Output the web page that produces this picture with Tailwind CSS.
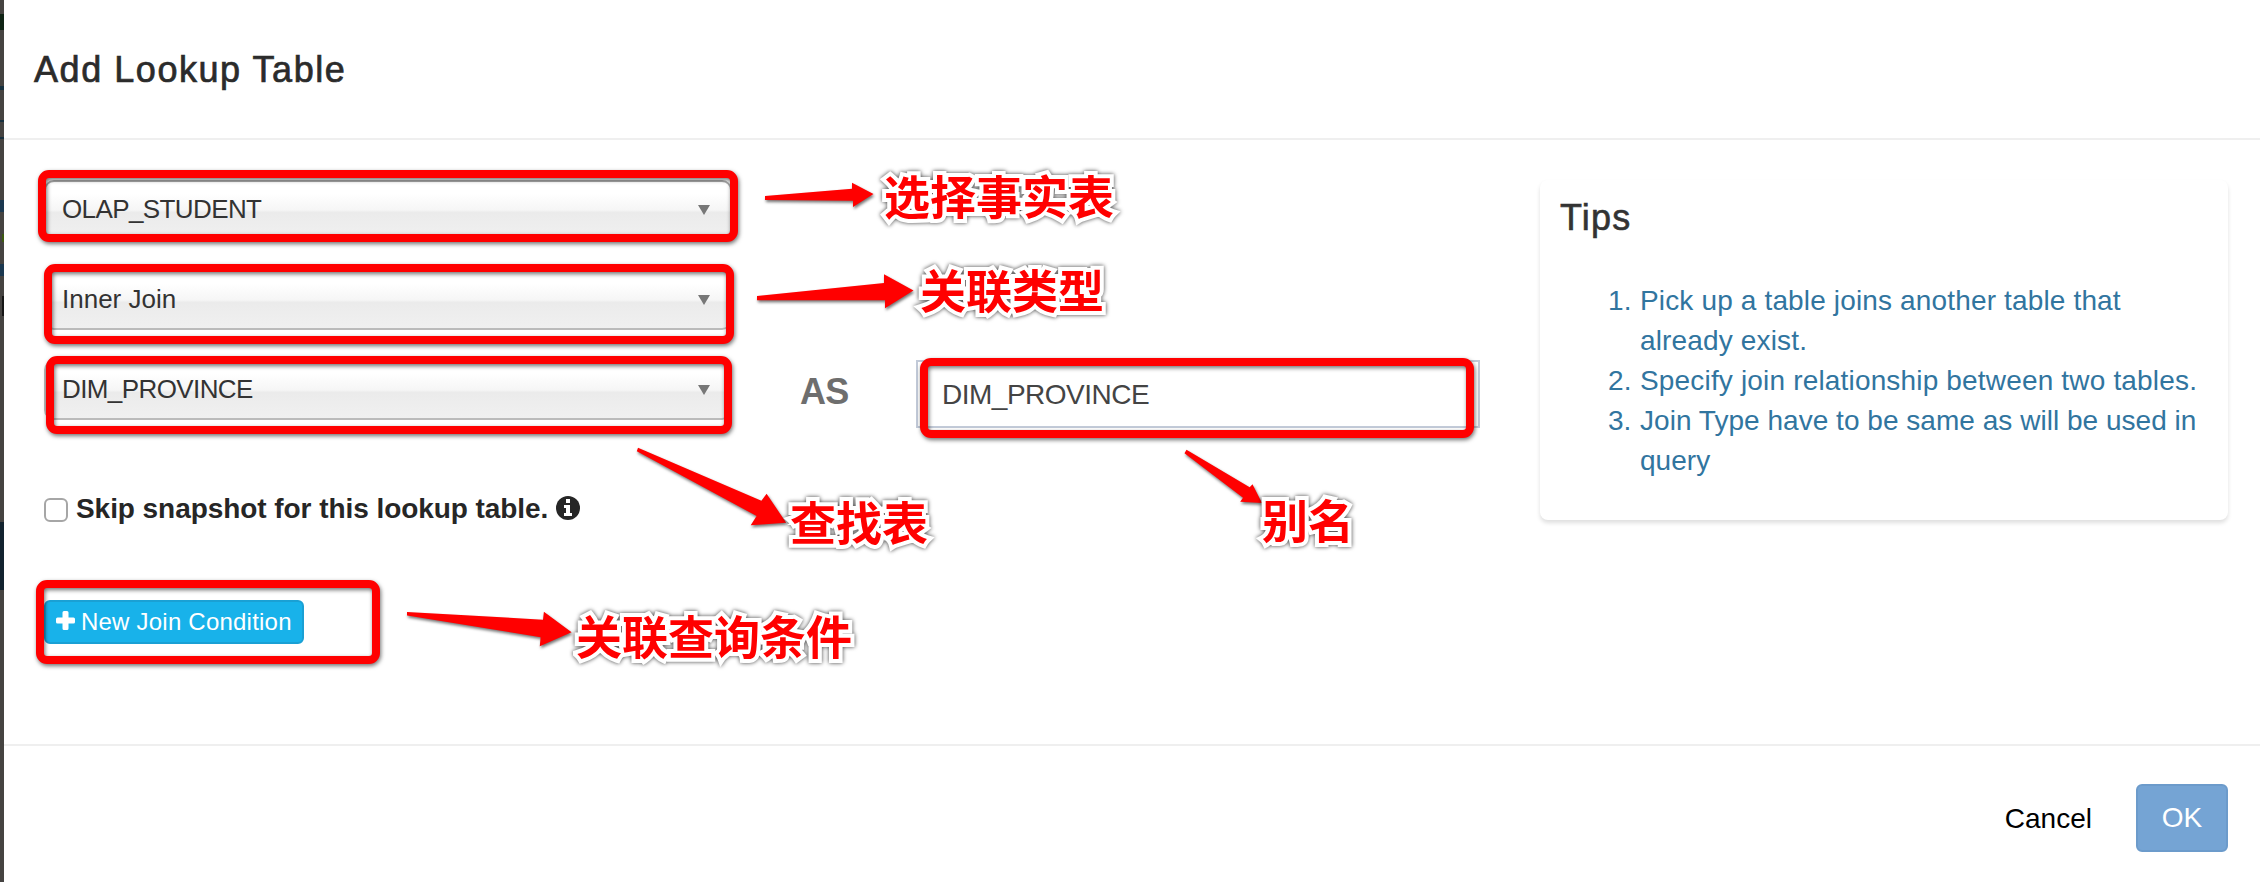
<!DOCTYPE html>
<html lang="en">
<head>
<meta charset="utf-8">
<title>Add Lookup Table</title>
<script src="https://cdn.jsdelivr.net/npm/@tailwindcss/browser@4"></script>
</head>
<body class="font-['Liberation_Sans','Noto_Sans_CJK_SC',sans-serif] bg-[#454341] w-[2260px] h-[882px] overflow-hidden">
<div class="relative flex h-[882px] w-[2260px]">
  <!-- dimmed page behind the dialog -->
  <div class="flex w-1 shrink-0 flex-col bg-[#454341]">
    <div class="mt-3.5 h-4 bg-[#0f2415]"></div>
    <div class="mt-14 h-1 bg-[#17303f]"></div>
    <div class="mt-[30px] h-0.5 bg-[#17303f]"></div>
    <div class="mt-[15px] h-0.5 bg-[#17303f]"></div>
    <div class="mt-[61px] h-3 bg-[#1b3850]"></div>
    <div class="mt-[22px] ml-0.5 h-2 bg-[#3d5a10]"></div>
    <div class="mt-[22px] h-3 bg-[#1b3850]"></div>
    <div class="mt-[20px] h-5 border-r-2 border-[#161616]"></div>
    <div class="mt-[206px] h-[68px] bg-[#12232f]"></div>
  </div>
  <main class="flex flex-1 flex-col bg-white">
    <header class="flex h-[140px] items-center border-b-2 border-[#efefef] pl-[30px] pt-0.5">
      <h1 class="whitespace-nowrap text-[36px] leading-[40px] tracking-[1.55px] text-[#2b2b2b] [-webkit-text-stroke:0.7px_#2b2b2b]">Add Lookup Table</h1>
    </header>
    <section class="flex h-[606px] border-b-2 border-[#efefef]">
      <div class="flex w-[1496px] flex-col pl-10 pt-10">
        <div class="flex h-[60px] w-[688px] items-center justify-between rounded-[10px] border-2 border-[#aaa] bg-[linear-gradient(#fff_20%,#f6f6f6_50%,#ebebeb_54%,#f0f0f0_100%)] pl-4 pr-5">
          <span class="mb-0.5 text-[26px] leading-[30px] tracking-[-0.6px] text-[#333]">OLAP_STUDENT</span>
          <svg class="h-2.5 w-3" viewBox="0 0 12 10"><path d="M0 0H12L6 10Z" fill="#777"/></svg>
        </div>
        <div class="mt-[30px] flex h-[60px] w-[688px] items-center justify-between rounded-[10px] border-2 border-[#bbb] bg-[linear-gradient(#fff_20%,#f6f6f6_50%,#ebebeb_54%,#f0f0f0_100%)] pl-4 pr-5">
          <span class="mb-0.5 text-[26px] leading-[30px] text-[#333]">Inner Join</span>
          <svg class="h-2.5 w-3" viewBox="0 0 12 10"><path d="M0 0H12L6 10Z" fill="#777"/></svg>
        </div>
        <div class="mt-[30px] flex h-[60px] items-start">
          <div class="flex h-[60px] w-[688px] items-center justify-between rounded-[10px] border-2 border-[#bbb] bg-[linear-gradient(#fff_20%,#f6f6f6_50%,#ebebeb_54%,#f0f0f0_100%)] pl-4 pr-5">
            <span class="mb-0.5 text-[26px] leading-[30px] tracking-[-0.6px] text-[#333]">DIM_PROVINCE</span>
            <svg class="h-2.5 w-3" viewBox="0 0 12 10"><path d="M0 0H12L6 10Z" fill="#777"/></svg>
          </div>
          <span class="ml-[68px] mt-3 w-[116px] text-[36px] font-bold leading-[40px] tracking-[-0.8px] text-[#6e6e6e]">AS</span>
          <div class="flex h-[68px] w-[564px] items-center border-2 border-[#c2cad8] bg-white pl-6">
            <span class="mt-0.5 text-[28px] leading-[32px] tracking-[-0.5px] text-[#444]">DIM_PROVINCE</span>
          </div>
        </div>
        <label class="mt-[76px] flex h-7 items-center">
          <span class="h-6 w-6 rounded-md border-2 border-[#a6a6a6] bg-white"></span>
          <span class="-mt-0.5 ml-2 w-[480px] whitespace-nowrap text-[28px] font-bold leading-[32px] tracking-[-0.06px] text-[#262626]">Skip snapshot for this lookup table.</span>
          <svg class="-mt-1 h-6 w-6" viewBox="0 0 24 24"><circle cx="12" cy="12" r="12" fill="#262626"/><path d="M10 3h4v4h-4zM8 9h6v8h2v3H8v-3h2v-5H8z" fill="#fff"/></svg>
        </label>
        <button class="mt-[76px] flex h-11 w-[260px] items-center rounded-md border-2 border-[#1aa0d4] bg-[#18b2ea] pl-[10px] text-white">
          <svg class="-mt-1 h-[19px] w-[19px]" viewBox="0 0 19 19"><path d="M8 0h3a1.5 1.5 0 0 1 1.5 1.5v5h5A1.5 1.5 0 0 1 19 8v3a1.5 1.5 0 0 1-1.500 1.500h-5v5A1.500 1.500 0 0 1 11 19H8a1.500 1.500 0 0 1-1.500-1.500v-5h-5A1.500 1.500 0 0 1 0 11V8a1.500 1.500 0 0 1 1.500-1.500h5v-5A1.500 1.500 0 0 1 8 0z" fill="#fff"/></svg>
          <span class="ml-1.5 whitespace-nowrap text-[24px] leading-[28px] tracking-[0.22px]">New Join Condition</span>
        </button>
      </div>
      <aside class="ml-10 mt-10 h-[340px] w-[688px] rounded-lg bg-white px-5 pt-[18px] shadow-[0_3px_4px_rgba(0,0,0,0.13)]">
        <h2 class="text-[36px] leading-[40px] tracking-[1.2px] text-[#333] [-webkit-text-stroke:0.6px_#333]">Tips</h2>
        <ol class="mt-[43px] list-none pl-px text-[28px] leading-[40px] text-[#31759f]">
          <li class="flex tracking-[0.15px]"><span class="ml-[47px] w-8">1.</span><span class="whitespace-nowrap">Pick up a table joins another table that<br>already exist.</span></li>
          <li class="flex tracking-[0.17px]"><span class="ml-[47px] w-8">2.</span><span class="whitespace-nowrap">Specify join relationship between two tables.</span></li>
          <li class="flex tracking-[0.03px]"><span class="ml-[47px] w-8">3.</span><span class="whitespace-nowrap">Join Type have to be same as will be used in<br>query</span></li>
        </ol>
      </aside>
    </section>
    <footer class="flex flex-1 items-center justify-end pr-8 text-[28px] leading-[32px]">
      <button class="mr-11 mt-2.5 text-black">Cancel</button>
      <button class="mt-2 h-[68px] w-[92px] rounded-md border-2 border-[#6c9bcb] bg-[#75a4d4] text-white">OK</button>
    </footer>
  </main>

  <!-- annotation frames -->
  <div class="absolute left-[38px] top-[170px] h-[72px] w-[700px] rounded-[11px] border-8 border-[#f00] drop-shadow-[1px_2px_2px_rgba(0,0,0,0.55)]"></div>
  <div class="absolute left-[44px] top-[264px] h-[80px] w-[690px] rounded-[11px] border-8 border-[#f00] drop-shadow-[1px_2px_2px_rgba(0,0,0,0.55)]"></div>
  <div class="absolute left-[46px] top-[356px] h-[78px] w-[686px] rounded-[11px] border-8 border-[#f00] drop-shadow-[1px_2px_2px_rgba(0,0,0,0.55)]"></div>
  <div class="absolute left-[920px] top-[358px] h-[80px] w-[554px] rounded-[11px] border-8 border-[#f00] drop-shadow-[1px_2px_2px_rgba(0,0,0,0.55)]"></div>
  <div class="absolute left-[36px] top-[580px] h-[84px] w-[344px] rounded-[11px] border-8 border-[#f00] drop-shadow-[1px_2px_2px_rgba(0,0,0,0.55)]"></div>

  <!-- annotation arrows -->
  <svg class="absolute left-0 top-0 drop-shadow-[1px_2px_1.5px_rgba(0,0,0,0.55)]" width="2260" height="882" viewBox="0 0 2260 882" fill="#f00">
    <path d="M765 196L852 188.700V182.700L873.500 194L853 207V200.700L765 200Z"/>
    <path d="M757 296L884 283V274.300L913.500 290.500L885 308.300V300.300L757 300.300Z"/>
    <path d="M638 447.700L761.400 500.700L766.600 493.700L786.200 522.700L750.700 525.300L756.600 516L636.800 451.300Z"/>
    <path d="M407 612L543 619.700L543.900 611.700L571.600 632.300L539.800 646.300L540.600 637.300L407 615.500Z"/>
    <path d="M1186.500 449.700L1249.700 487.300L1252.500 484.300L1262 503L1240.200 501.700L1243 497.700L1184.500 453.300Z"/>
  </svg>

  <!-- annotation captions -->
  <div class="absolute inset-0 whitespace-nowrap font-['Noto_Sans_CJK_SC',sans-serif] text-[46px] font-bold leading-[46px] text-[#f00] [-webkit-text-stroke:8px_#fff] [paint-order:stroke_fill] [stroke-linejoin:round] drop-shadow-[0_0_2px_rgba(0,0,0,0.75)]">
    <span class="absolute left-[884px] top-[171px]">选择事实表</span>
    <span class="absolute left-[920px] top-[265px]">关联类型</span>
    <span class="absolute left-[790px] top-[497px]">查找表</span>
    <span class="absolute left-[1262px] top-[495px]">别名</span>
    <span class="absolute left-[576px] top-[611px]">关联查询条件</span>
  </div>
</div>
</body>
</html>
